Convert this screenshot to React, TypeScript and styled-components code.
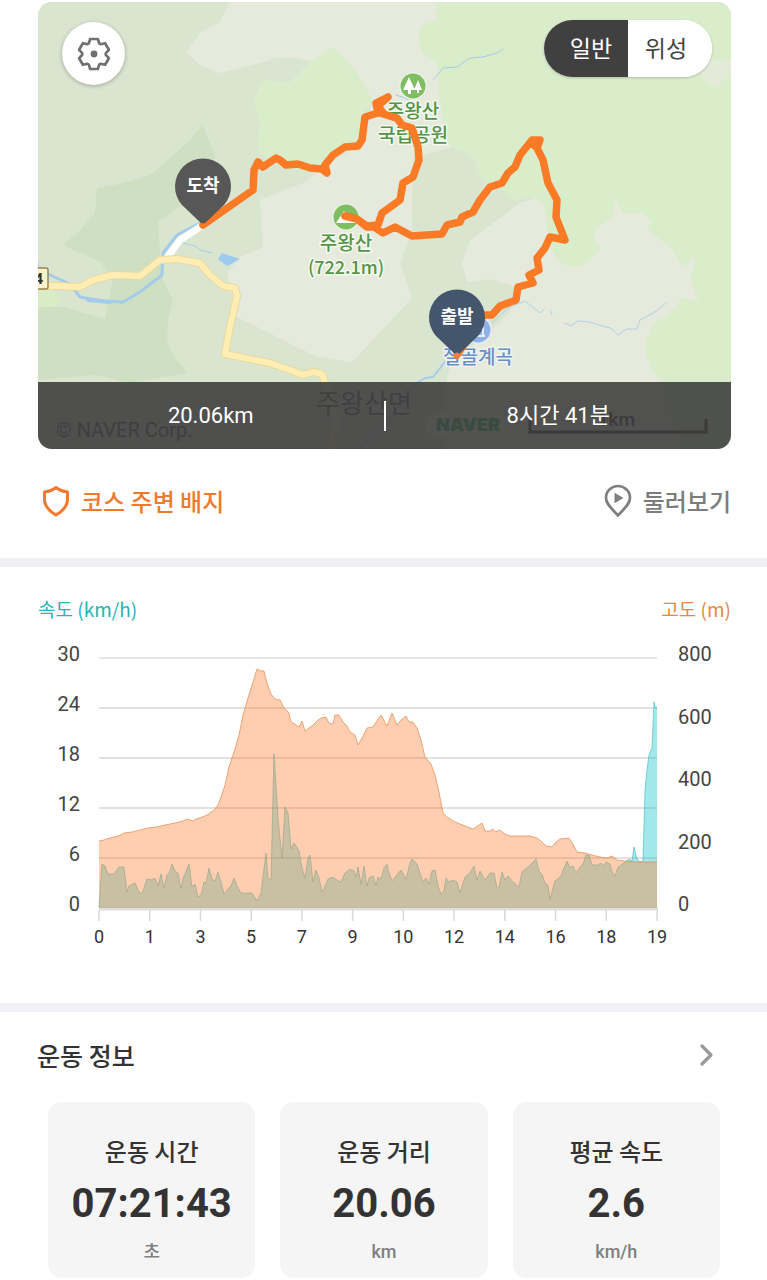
import React, { useState } from 'react';
import styled, { createGlobalStyle } from 'styled-components';

const KR = '"Noto Sans CJK KR", sans-serif';
const LATIN = 'Roboto, "Noto Sans CJK KR", sans-serif';

const GlobalStyle = createGlobalStyle`
  * { box-sizing: border-box; }
  body { margin: 0; background: #fff; font-family: ${KR}; color: #333; }
  button { font: inherit; border: 0; background: none; padding: 0; cursor: pointer; }
  h2, h3, p, dl, dt, dd { margin: 0; font-size: inherit; font-weight: inherit; }
`;

const Page = styled.main`
  padding: 2px 0;
`;

const MapCard = styled.section`
  position: relative;
  display: flex;
  flex-direction: column;
  justify-content: flex-end;
  margin: 0 36px 0 38px;
  aspect-ratio: 693 / 447;
  border-radius: 14px;
  overflow: hidden;
  background: #dae5d0;
`;

const MapDrawing = styled.svg`
  position: absolute;
  inset: 0;
  width: 100%;
  height: 100%;
`;

const SettingsButton = styled.button`
  position: absolute;
  top: 20px;
  left: 24px;
  display: grid;
  place-items: center;
  width: 63px;
  height: 63px;
  border-radius: 50%;
  background: #fff;
  box-shadow: 0 1px 4px rgba(0, 0, 0, 0.28);
`;

const LayerToggle = styled.div`
  position: absolute;
  top: 18px;
  right: 19px;
  display: flex;
  height: 57px;
  border-radius: 29px;
  overflow: hidden;
  background: #fff;
  box-shadow: 0 1px 3px rgba(0, 0, 0, 0.2);
`;

const LayerButton = styled.button<{ $active: boolean; $side: 'left' | 'right' }>`
  width: 84px;
  padding: ${(p) => (p.$side === 'left' ? '0 0 4px 10px' : '0 8px 4px 0')};
  font-size: 23px;
  line-height: 32px;
  color: ${(p) => (p.$active ? '#fff' : '#444')};
  background: ${(p) => (p.$active ? '#404040' : '#fff')};
`;

const MapSummary = styled.div`
  position: relative;
  display: grid;
  grid-template-columns: 1fr 2px 1fr;
  align-items: center;
  height: 67px;
  background: rgba(62, 62, 62, 0.89);
  color: #fff;
  text-align: center;
`;

const SummaryValue = styled.p`
  font-family: ${LATIN};
  font-size: 22px;
  line-height: 32px;
`;

const SummaryRule = styled.span`
  height: 30px;
  background: #fff;
`;

const Links = styled.nav`
  display: flex;
  justify-content: space-between;
  align-items: center;
  height: 109px;
  padding: 0 36px 6px 42px;
`;

const IconLink = styled.a<{ $color: string }>`
  display: flex;
  align-items: center;
  gap: 11px;
  color: ${(p) => p.$color};
  font-size: 24px;
  font-weight: 500;
  line-height: 36px;
  text-decoration: none;
`;

const Band = styled.hr`
  height: 9px;
  margin: 0;
  border: 0;
  background: #f1f1f5;
`;

const ChartSection = styled.section`
  padding: 28px 36px 53px 38px;
`;

const Legend = styled.div`
  display: flex;
  justify-content: space-between;
  font-size: 19px;
  line-height: 28px;
`;

const LegendItem = styled.h3<{ $color: string }>`
  color: ${(p) => p.$color};
`;

const ChartDrawing = styled.svg`
  display: block;
  width: 100%;
  margin-top: 17px;
`;

const InfoHeader = styled.header`
  display: flex;
  justify-content: space-between;
  align-items: center;
  padding: 24px 52px 0 37px;
`;

const InfoTitle = styled.h2`
  font-size: 25px;
  font-weight: 500;
  line-height: 38px;
`;

const MoreButton = styled.button`
  display: grid;
  place-items: center;
`;

const Cards = styled.dl`
  display: grid;
  grid-template-columns: repeat(3, 1fr);
  gap: 25px;
  padding: 28px 47px 0 48px;
`;

const StatCard = styled.div`
  display: flex;
  flex-direction: column;
  align-items: center;
  height: 176px;
  padding-top: 32px;
  border-radius: 14px;
  background: #f5f5f5;
`;

const StatLabel = styled.dt`
  font-size: 24px;
  font-weight: 500;
  line-height: 34px;
`;

const StatValue = styled.dd`
  margin-top: 10px;
  font-family: ${LATIN};
  font-size: 40px;
  font-weight: 700;
  line-height: 52px;
`;

const StatUnit = styled.dd`
  margin-top: 8px;
  font-family: ${LATIN};
  font-size: 18px;
  font-weight: 500;
  line-height: 28px;
  color: #808080;
`;

/* Outline of a six-toothed gear, built by turning one tooth around the centre. */
const gearPoints = Array.from({ length: 6 }, (_, i) => {
  const a = (i * Math.PI) / 3;
  return [[-5.2, -10.6], [-3.8, -15], [3.8, -15], [5.2, -10.6]]
    .map(([x, y]) => `${(x * Math.cos(a) - y * Math.sin(a)).toFixed(2)},${(x * Math.sin(a) + y * Math.cos(a)).toFixed(2)}`)
    .join(' ');
}).join(' ');

const GearIcon = () => (
  <svg width="36" height="36" viewBox="-18 -18 36 36" aria-hidden="true">
    <polygon points={gearPoints} fill="none" stroke="#707070" strokeWidth="2.7" strokeLinejoin="round" />
    <circle r="3.4" fill="#707070" />
  </svg>
);

const ShieldIcon = () => (
  <svg width="28" height="32" viewBox="0 0 28 32" fill="none" stroke="#ee7a30" strokeWidth="3" strokeLinejoin="round" aria-hidden="true">
    <path d="M14 2.5C11 5 7 6.500 2.500 7V14C2.500 21 7 26 14 30C21 26 25.500 21 25.500 14V7C21 6.500 17 5 14 2.500Z" />
  </svg>
);

const PlayPinIcon = () => (
  <svg width="28" height="34" viewBox="0 0 28 34" aria-hidden="true">
    <path d="M14 2C7.300 2 2 7.200 2 13.800C2 20.500 8 24.500 14 31.500C20 24.500 26 20.500 26 13.800C26 7.200 20.700 2 14 2Z" fill="none" stroke="#808080" strokeWidth="2.7" strokeLinejoin="round" />
    <path d="M10.500 8.800L19.500 14L10.500 19.200Z" fill="#808080" />
  </svg>
);

const ROUTE =
  'M203 225L253 190L254 170L258 162L263 167L276 158L280 160L286 165L298 164L310 168L322 169L327 173L325 165L333 155L345 147L358 146L362 140L365 117L378 113L376 103L388 97L378 106L384 114L396 118L380 113L397 118L402 125L412 128L418 147L419 160L413 177L403 183L400 200L382 213L378 225L367 226L357 219L345 216L357 219L367 227L374 227L383 233L395 227L412 236L442 234L447 225L460 222L462 217L473 212L480 200L490 187L502 183L508 173L515 167L520 155L532 140L540 140L537 148L532 143L537 148L543 160L548 183L557 200L556 217L565 240L550 237L545 248L537 258L539 270L529 275L533 283L518 287L516 300L500 306L492 315L484 315L457 355';

const YELLOW_ROAD =
  'M38 286L60 286L80 287L93 280L113 275L140 276L160 260L177 259L200 263L210 275L223 286L235 288L237 296L230 327L225 354L270 363L290 370L303 375L313 372L322 374L327 388L336 420L330 449';

const Pin = ({ x, y, label, color }: { x: number; y: number; label: string; color: string }) => (
  <g transform={`translate(${x} ${y})`}>
    <path d="M0 39L-21 19A28 28 0 1 1 21 19Z" fill={color} />
    <text y="6" textAnchor="middle" fontSize="18" fontWeight="700" fill="#fff">{label}</text>
  </g>
);

const MapLabel = ({ x, y, size = 19, fill, halo = '#f4faee', children }: { x: number; y: number; size?: number; fill: string; halo?: string; children: React.ReactNode }) => (
  <text x={x} y={y} textAnchor="middle" fontSize={size} fontWeight="500" fill={fill} stroke={halo} strokeWidth="3" strokeLinejoin="round" paintOrder="stroke">
    {children}
  </text>
);

const CourseMap = () => (
  <MapDrawing viewBox="38 2 693 447" preserveAspectRatio="xMidYMid slice" fontFamily={KR} role="img" aria-label="코스 지도">
    <rect x="38" y="2" width="693" height="447" fill="#dae5d0" />
    <path fill="#cfdfc2" d="M203 125L187 143L153 173Q135 182 97 188L95 213L80 230L63 245L100 262L113 278L105 319L63 307L38 307V380L97 375L130 383L187 373L172 353L167 340L168 320L173 300L163 280L160 253L158 222L175 209L197 200L215 157Z" />
    <path fill="#d8edc6" d="M38 290H52L62 300L56 306L38 307Z" />
    <path fill="#e6eadd" d="M230 2L220 22L200 33L186 52L200 65L220 73L280 58L310 61L340 60L373 100L362 143L327 165L303 183L260 200L263 247L240 257L227 273L237 317L270 333Q300 350 320 357L352 362L412 298L400 263L412 230L413 157L460 150L440 100V2Z" />
    <path fill="#e6eadd" d="M520 203L470 240L462 263L467 282L490 279L517 287L510 312L480 340L450 365L443 395V449H731V180L560 190Z" />
    <path fill="#dae5d0" d="M413 157L453 147L483 165L520 203L470 240L440 240L412 230Z" />
    <path fill="#daedcb" d="M333 47L310 62L290 82L263 80L253 100L260 123L257 153L277 162L310 173L327 163L360 143L361 117L373 100L357 73L347 60Z" />
    <path fill="#daedcb" d="M437 2L435 20L422 25Q414 38 423 53L437 63L440 103L446 143L473 157L483 180L500 188L513 200L537 198L545 207L547 230Q550 260 570 267Q580 268 587 262L602 248Q590 238 597 228L613 217L615 197L623 213L643 213L652 222L647 227L660 240L673 250L682 267L693 257L695 263L690 277L698 302L683 297L667 317Q650 318 645 350Q650 370 660 380L680 449H731V2Z" />
    <path fill="#e3ead8" d="M702 75Q708 89 717 87L731 73V60H705Z" />
    <path fill="#d9e4d1" d="M270 59Q292 55 310 62L290 82L270 80Z" />

    <g fill="none" stroke="#a3cbea" strokeLinejoin="round" strokeLinecap="round">
      <path strokeWidth="3" d="M200 223L177 235L163 253L162 275L140 292L123 302L103 301L80 297L70 284L50 275L38 270L36 255" />
      <path strokeWidth="4" d="M88 300L110 302" />
      <path strokeWidth="1" d="M183 243L195 246L200 250L212 253M396 95L405 98L413 103M433 80L443 68L457 67L470 58L483 57L497 53L503 49" />
      <path strokeWidth="1" opacity="0.8" d="M492 323L508 308L525 301L540 313L544 309M550 310L552 315M565 323L571 326L578 321L590 322L606 327L611 328L618 335L627 329L637 329L640 320L655 312L667 302" />
      <path strokeWidth="2" d="M445 362L433 377L425 378L415 384L390 420L360 449" />
    </g>
    <path fill="#9dcaf0" d="M222 253L240 259L233 263L227 266L218 259Z" />
    <path d="M203 225L180 240L167 258" fill="none" stroke="#fff" strokeWidth="7" />
    <path d={YELLOW_ROAD} fill="none" stroke="#e9d9a0" strokeWidth="8" strokeLinejoin="round" />
    <path d={YELLOW_ROAD} fill="none" stroke="#ffedb3" strokeWidth="6" strokeLinejoin="round" />
    <rect x="20" y="268" width="28" height="21" rx="2" fill="#fff4c9" stroke="#9b8452" strokeWidth="1.500" />
    <text x="43" y="284" textAnchor="end" fontFamily="Roboto" fontSize="15" fontWeight="700" fill="#333">4</text>

    <circle cx="413" cy="86" r="13.500" fill="#eef6e8" />
    <circle cx="413" cy="86" r="12.500" fill="#7fbd62" />
    <path fill="#fff" d="M409 77L415 90H411V94H408V90H403ZM418 80L422 90H419V93H417V90H414L416 85Z" />
    <circle cx="346" cy="217" r="13.500" fill="#eef6e8" />
    <circle cx="346" cy="217" r="12.500" fill="#7fbd62" />
    <path fill="#fff" d="M336 223L344 211L349 216L356 223Z" />
    <circle cx="478" cy="330" r="14" fill="#e4edf4" />
    <circle cx="478" cy="330" r="12.500" fill="#8fb1e4" />
    <path d="M473 336H485M476 336V328H483V336" fill="none" stroke="#fff" strokeWidth="1.500" />

    <MapLabel x={413} y={118} fill="#569448">주왕산</MapLabel>
    <MapLabel x={413} y={142} fill="#569448">국립공원</MapLabel>
    <MapLabel x={346} y={250} fill="#569448">주왕산</MapLabel>
    <MapLabel x={346} y={274} size={18} fill="#569448">(722.1m)</MapLabel>
    <MapLabel x={478} y={364} fill="#6a8fc4" halo="#eef3f4">절골계곡</MapLabel>
    <text x="364" y="413" textAnchor="middle" fontSize="26" fill="#555">주왕산면</text>

    <text x="56" y="437" fontFamily="Roboto" fontSize="20" fill="#444">© NAVER Corp.</text>
    <rect x="426" y="412" width="82" height="25" rx="12" fill="#f0f5ec" />
    <text x="468" y="431" textAnchor="middle" fontFamily="Inter" fontSize="18" fontWeight="900" fill="#03b34a">NAVER</text>
    <path d="M530 419V432H706V419" fill="none" stroke="#222" strokeWidth="3" />
    <text x="635" y="426" textAnchor="end" fontFamily="Roboto" fontSize="19" fontWeight="500" fill="#222">1km</text>

    <path d={ROUTE} fill="none" stroke="#fb7a26" strokeWidth="7.500" strokeLinejoin="round" strokeLinecap="round" />
    <Pin x={203} y={186} label="도착" color="#575757" />
    <Pin x={457} y={317} label="출발" color="#43566b" />
    <circle cx="203" cy="225" r="2" fill="#fb7a26" />
    <circle cx="457" cy="355" r="2.500" fill="#e8824a" />
  </MapDrawing>
);

const ALTITUDE =
  '99,841 104,840 110,838 118,836 124,833 132,832 140,830 148,828 156,827 165,825 175,823 183,821 187,819 193,821 196,819 200,818 207,815 213,811 218,805 221,797 225,785 229,767 234,752 239,735 243,715 248,698 252,685 257,669 261,671 264,671 267,683 271,694 275,699 280,700 284,708 289,713 291,722 296,725 299,727 302,721 305,731 309,728 313,725 317,721 321,718 326,717 329,723 333,724 335,715 339,715 343,722 347,726 350,732 355,735 358,745 362,738 367,728 373,727 377,721 381,715 387,726 392,713 397,725 401,720 406,716 409,722 413,722 417,728 421,740 425,757 431,764 435,775 439,792 443,813 447,817 455,822 465,826 473,829 479,825 482,823 485,831 490,831 493,829 495,832 500,830 505,834 510,836 520,836 530,836 537,838 541,841 546,846 552,847 556,842 560,839 569,838 573,844 577,852 585,853 592,855 600,857 607,858 612,856 617,860 625,861 635,862 645,862 657,862';

const SPEED =
  '99,907 102,864 105,866 108,874 114,874 119,867 124,867 127,892 129,886 135,883 140,894 143,891 147,879 152,880 155,878 158,886 161,874 164,888 167,875 169,874 172,864 175,871 178,873 181,888 184,876 189,864 192,887 195,884 198,897 201,895 204,882 206,883 209,868 212,879 215,881 218,872 221,882 224,894 228,889 231,886 234,878 238,888 241,893 252,893 257,901 261,893 263,877 266,853 268,878 271,880 274,754 278,818 282,858 285,807 288,813 291,849 294,843 299,851 302,868 305,878 308,858 310,855 313,882 316,870 319,878 322,892 324,889 328,879 333,877 337,880 341,882 345,873 350,869 354,871 356,877 358,867 361,884 364,866 367,886 369,878 373,876 376,885 378,877 381,879 384,868 387,864 389,873 392,881 396,876 401,870 406,879 410,863 412,859 417,864 420,873 423,882 426,878 429,884 432,871 435,870 438,886 441,894 444,891 446,878 449,882 453,880 457,882 460,893 465,877 470,873 474,866 477,880 480,871 485,880 490,873 494,873 497,888 499,888 502,872 505,880 508,876 514,883 519,887 522,872 527,868 531,864 536,859 539,871 542,874 545,883 548,885 550,899 555,881 561,876 564,868 567,861 570,868 573,866 576,873 580,867 583,864 586,855 589,855 592,865 598,865 601,863 604,866 606,862 610,864 612,872 615,876 618,867 624,863 629,859 632,861 634,847 637,859 640,862 643,861 645,790 647,770 649,755 652,748 654,702 655,707 657,707';

const SPEED_TICKS = [30, 24, 18, 12, 6, 0];
const ALTITUDE_TICKS = [800, 600, 400, 200, 0];
const DISTANCE_TICKS = [0, 1, 3, 5, 7, 9, 10, 12, 14, 16, 18, 19];
const LEFT = 99;
const RIGHT = 657;
const TOP = 658;
const BASE = 908;

const CourseChart = () => (
  <ChartDrawing viewBox="38 640 693 310" fontFamily={LATIN} fontSize="20" fill="#444" role="img" aria-label="속도와 고도 그래프">
    {SPEED_TICKS.map((value, i) => {
      const y = TOP + ((BASE - TOP) * i) / (SPEED_TICKS.length - 1);
      return (
        <g key={value}>
          {value > 0 && <path d={`M${LEFT} ${y}H${RIGHT}`} stroke="#dedede" strokeWidth="1.500" />}
          <text x="80" y={y + 3} textAnchor="end">{value}</text>
        </g>
      );
    })}
    {ALTITUDE_TICKS.map((value, i) => (
      <text key={value} x="678" y={TOP + 3 + ((BASE - TOP) * i) / (ALTITUDE_TICKS.length - 1)}>{value}</text>
    ))}
    <path d={`M${LEFT} ${BASE + 1}H${RIGHT + 1}`} stroke="#dedede" strokeWidth="3" />
    {DISTANCE_TICKS.map((value, i) => {
      const x = LEFT + ((RIGHT - LEFT) * i) / (DISTANCE_TICKS.length - 1);
      return (
        <g key={value}>
          <path d={`M${x} ${BASE + 2}V${BASE + 13}`} stroke="#d8d8d8" strokeWidth="1.500" />
          <text x={x} y="943" textAnchor="middle" fontSize="18" fill="#333">{value}</text>
        </g>
      );
    })}
    <polygon points={`${SPEED} ${RIGHT},${BASE} ${LEFT},${BASE}`} fill="#22c8cf" fillOpacity="0.42" />
    <polyline points={SPEED} fill="none" stroke="#3cb8bc" strokeOpacity="0.6" />
    <polygon points={`${ALTITUDE} ${RIGHT},${BASE} ${LEFT},${BASE}`} fill="#ff8840" fillOpacity="0.42" />
    <polyline points={ALTITUDE} fill="none" stroke="#e08a50" strokeOpacity="0.7" />
    {/* faint grid repeated over the filled areas */}
    <path d={`M${LEFT} 708H${RIGHT}M${LEFT} 758H${RIGHT}M${LEFT} 808H${RIGHT}M${LEFT} 858H${RIGHT}`} stroke="#806040" strokeOpacity="0.08" />
  </ChartDrawing>
);

const STATS = [
  { label: '운동 시간', value: '07:21:43', unit: '초' },
  { label: '운동 거리', value: '20.06', unit: 'km' },
  { label: '평균 속도', value: '2.6', unit: 'km/h' },
];

export default function App() {
  const [layer, setLayer] = useState<'normal' | 'satellite'>('normal');
  return (
    <Page>
      <GlobalStyle />
      <MapCard>
        <CourseMap />
        <SettingsButton type="button" aria-label="설정">
          <GearIcon />
        </SettingsButton>
        <LayerToggle>
          <LayerButton type="button" $side="left" $active={layer === 'normal'} onClick={() => setLayer('normal')}>일반</LayerButton>
          <LayerButton type="button" $side="right" $active={layer === 'satellite'} onClick={() => setLayer('satellite')}>위성</LayerButton>
        </LayerToggle>
        <MapSummary>
          <SummaryValue>20.06km</SummaryValue>
          <SummaryRule />
          <SummaryValue>8시간 41분</SummaryValue>
        </MapSummary>
      </MapCard>
      <Links>
        <IconLink href="#badges" $color="#ee7a30"><ShieldIcon />코스 주변 배지</IconLink>
        <IconLink href="#tour" $color="#7c7c7c"><PlayPinIcon />둘러보기</IconLink>
      </Links>
      <Band />
      <ChartSection>
        <Legend>
          <LegendItem $color="#1fb5b5">속도 (km/h)</LegendItem>
          <LegendItem $color="#e48a3f">고도 (m)</LegendItem>
        </Legend>
        <CourseChart />
      </ChartSection>
      <Band />
      <InfoHeader>
        <InfoTitle>운동 정보</InfoTitle>
        <MoreButton type="button" aria-label="운동 정보 더보기">
          <svg width="16" height="24" viewBox="0 0 16 24" fill="none" stroke="#999" strokeWidth="3.200" strokeLinecap="round" strokeLinejoin="round" aria-hidden="true">
            <path d="M3 3L12 12L3 21" />
          </svg>
        </MoreButton>
      </InfoHeader>
      <Cards>
        {STATS.map((s) => (
          <StatCard key={s.label}>
            <StatLabel>{s.label}</StatLabel>
            <StatValue>{s.value}</StatValue>
            <StatUnit>{s.unit}</StatUnit>
          </StatCard>
        ))}
      </Cards>
    </Page>
  );
}
